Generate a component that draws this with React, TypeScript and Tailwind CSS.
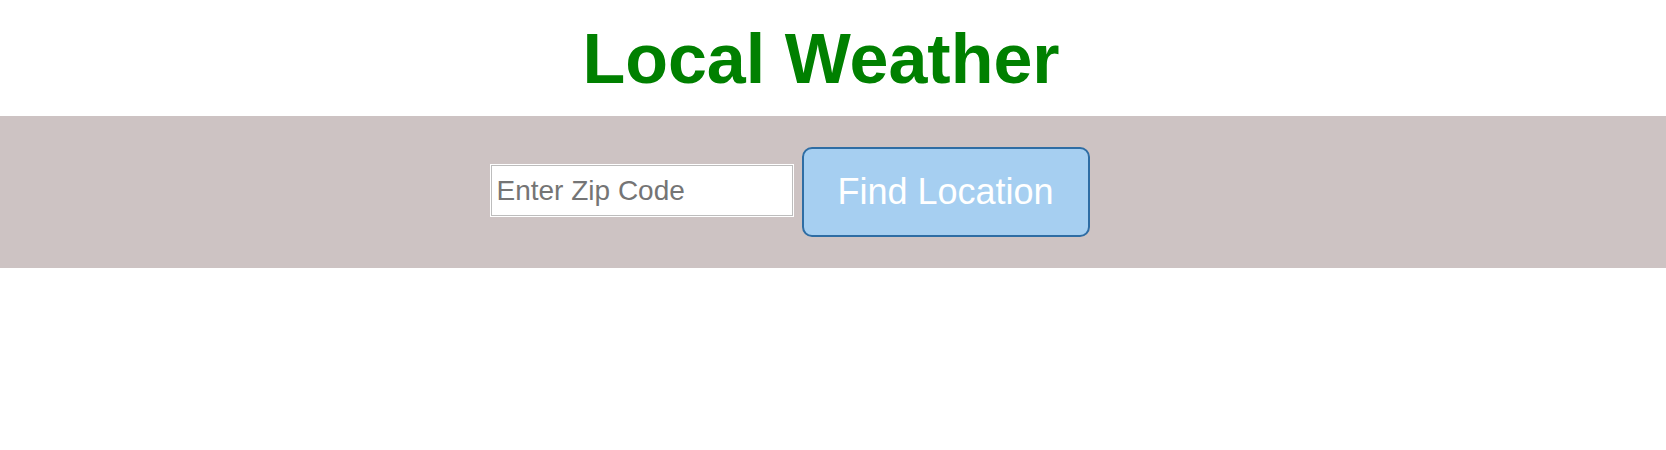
export default function App() {
  return (
    <div className="min-h-[450px] bg-white font-['Liberation_Sans',Arial,sans-serif]">
      <header className="flex justify-center pr-[24px] pt-[24px] pb-[22px]">
        <h1 className="text-[70px] leading-none font-bold text-[#008000]">Local Weather</h1>
      </header>

      <section className="h-[152px] bg-[#cdc3c3] flex items-start justify-center gap-[9px] pr-[86px]">
        <input
          type="text"
          placeholder="Enter Zip Code"
          className="mt-[49px] w-[302px] h-[51px] px-[5px] bg-white border border-[#bdbdbd] shadow-[0_0_0_1px_#ffffff] text-[28px] text-[#333] placeholder:text-[#757575] outline-none"
        />
        <button
          type="button"
          className="mt-[31px] w-[288px] h-[90px] rounded-[10px] border-2 border-[#2e6da4] bg-[#a6cff1] text-white text-[36px] leading-none"
        >
          Find Location
        </button>
      </section>
    </div>
  );
}
